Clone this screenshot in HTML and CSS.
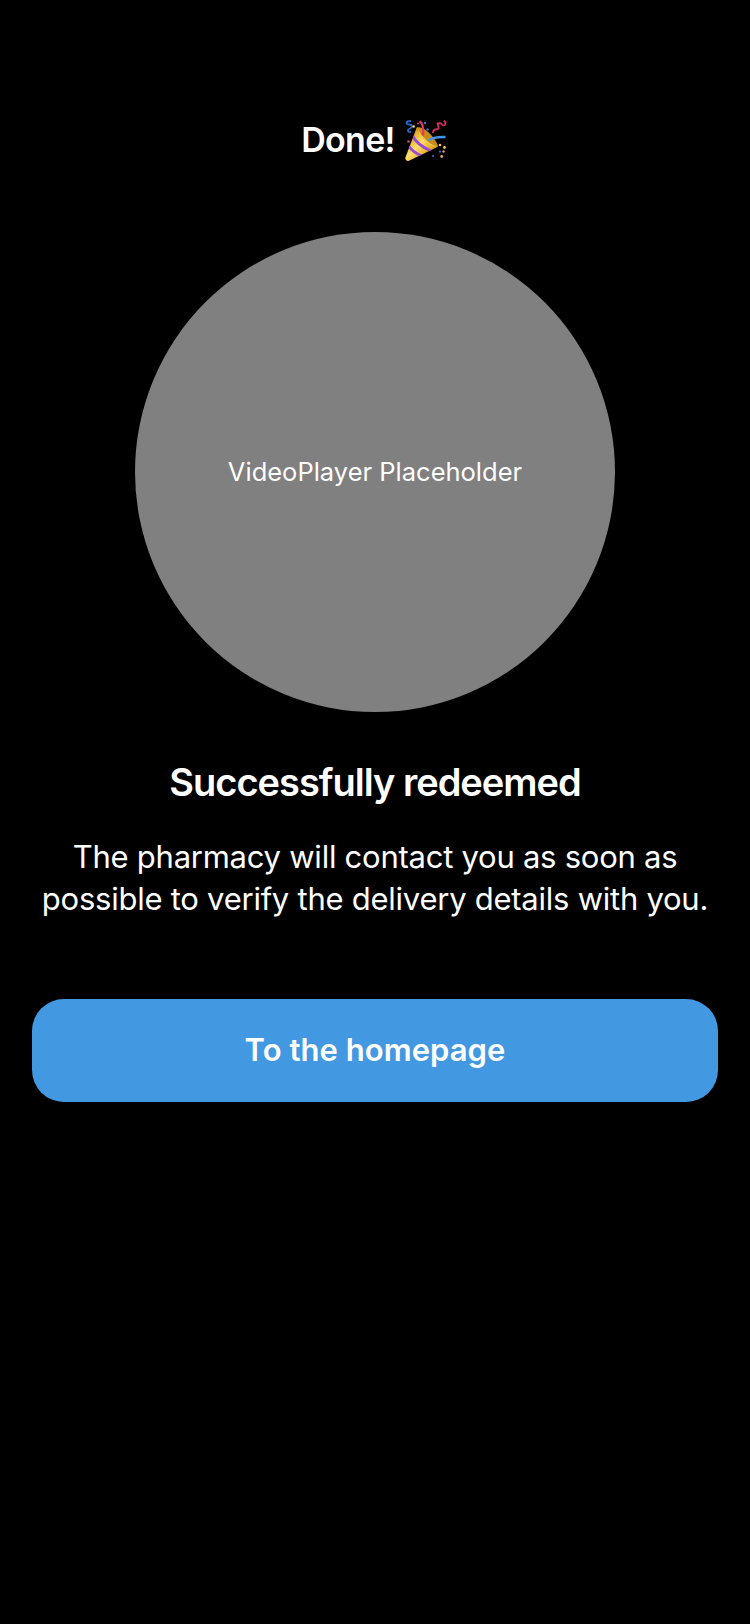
FILE: index.html
```html
<!DOCTYPE html>
<html lang="en">
<head>
<meta charset="utf-8">
<meta name="viewport" content="width=device-width, initial-scale=1">
<title>Done!</title>
<link rel="stylesheet" href="styles.css">
</head>
<body>
<main class="screen">
  <header class="header">
    <h1 class="header-title">Done!</h1>
    <svg class="popper" viewBox="0 0 56 52" role="img" aria-label="Party popper">
      <defs>
        <linearGradient id="cone" x1="14" y1="20" x2="34" y2="38" gradientUnits="userSpaceOnUse">
          <stop offset="0" stop-color="#d9a21c"/>
          <stop offset=".45" stop-color="#ffe06a"/>
          <stop offset="1" stop-color="#d89a13"/>
        </linearGradient>
        <clipPath id="cone-clip"><path d="M18.8 13.5 Q31 15.5 39.5 33 L11 46.8 Q7.4 47.5 7.3 43.8Z"/></clipPath>
      </defs>
      <path d="M18.8 13.5 Q31 15.5 39.5 33 L11 46.8 Q7.4 47.5 7.3 43.8Z" fill="url(#cone)"/>
      <g clip-path="url(#cone-clip)" fill="none" stroke="#9a4bd6" stroke-width="2.8">
        <path d="M14 21 Q19 31 33 37"/>
        <path d="M10 31 Q14 38 24 42"/>
      </g>
      <path d="M19 13.5C23 12 29 16 34 22C38 27 41 32 39.5 33C35 33 30 28 25 23C20 18 17 15 19 13.5Z" fill="#c98d17"/>
      <path d="M20 15C23 22 30 30 39 32.5C32 33.5 20 23 20 15Z" fill="#f4ca4a"/>
      <path d="M21.5 7.2C25 9 25.8 13 25 21.5" fill="none" stroke="#e9385f" stroke-width="2.3"/>
      <path d="M30.5 26.5C34 23.5 40 22.8 47.5 23" fill="none" stroke="#4095ec" stroke-width="2.4"/>
      <path d="M13 7C7.5 7 7.5 10.5 11 10.5S15 13 12 14.5S9 18 13 18" fill="none" stroke="#2466c8" stroke-width="1.9"/>
      <path d="M46 6.5C49.5 10 46 13 44 10.5S39 9 40.5 13S34.5 13 35 19" fill="none" stroke="#c92c5d" stroke-width="1.9"/>
      <g fill="#f8c943"><circle cx="15.7" cy="12.5" r="1.3"/><circle cx="42" cy="31" r="1.3"/><circle cx="46.5" cy="33.5" r="1.4"/></g>
      <g fill="#2681cf"><circle cx="27" cy="9" r="1.2"/><circle cx="29.5" cy="15.5" r="1.2"/><circle cx="35" cy="42" r="1"/><circle cx="42" cy="37.7" r="1.1"/></g>
      <g fill="#dc3f76"><circle cx="20" cy="9.5" r="1.1"/><circle cx="10.5" cy="27.5" r="1.3"/><circle cx="39.5" cy="9.5" r="1"/></g>
      <g fill="#eda060"><circle cx="45.5" cy="37.5" r="1.2"/><circle cx="43.7" cy="42.5" r="1.4"/></g>
    </svg>
  </header>
  <div class="video"><span class="video-label">VideoPlayer Placeholder</span></div>
  <h2 class="title">Successfully redeemed</h2>
  <p class="message">The pharmacy will contact you as soon as possible to verify the delivery details with you.</p>
  <button class="home-button" type="button"><span class="home-label">To the homepage</span></button>
</main>
</body>
</html>
```
FILE: styles.css
```css
* { box-sizing: border-box; }
body {
  margin: 0;
  background: #000;
  color: #fff;
  font-family: Inter, "Liberation Sans", sans-serif;
}
.screen {
  display: flex;
  flex-direction: column;
  align-items: center;
  width: 750px;
  height: 1624px;
  padding: 119px 32px 0;
}
.header {
  display: flex;
  align-items: center;
  justify-content: center;
  height: 41px;
  padding-left: 5px;
}
.header-title {
  margin: 0;
  font-size: 34px;
  line-height: 41px;
  font-weight: 600;
  letter-spacing: -0.7px;
}
.popper {
  width: 56px;
  height: 52px;
  margin-left: 3px;
}
.video {
  display: flex;
  align-items: center;
  justify-content: center;
  width: 480px;
  height: 480px;
  margin-top: 72px;
  border-radius: 50%;
  background: #808080;
}
.video-label {
  font-size: 25.5px;
  line-height: 32px;
}
.title {
  margin: 46px 0 0;
  font-size: 38px;
  line-height: 49px;
  font-weight: 600;
  letter-spacing: -1px;
}
.message {
  width: 686px;
  margin: 29px 0 0;
  font-size: 31px;
  line-height: 42px;
  text-align: center;
  letter-spacing: -0.25px;
}
.home-button {
  width: 686px;
  height: 103px;
  margin-top: 79px;
  padding: 0 0 1px;
  border: 0;
  border-radius: 32px;
  background: #4299e1;
  color: #fff;
  font: inherit;
}
.home-label {
  font-size: 31px;
  line-height: 40px;
  font-weight: 600;
  letter-spacing: 0.05px;
}
```
